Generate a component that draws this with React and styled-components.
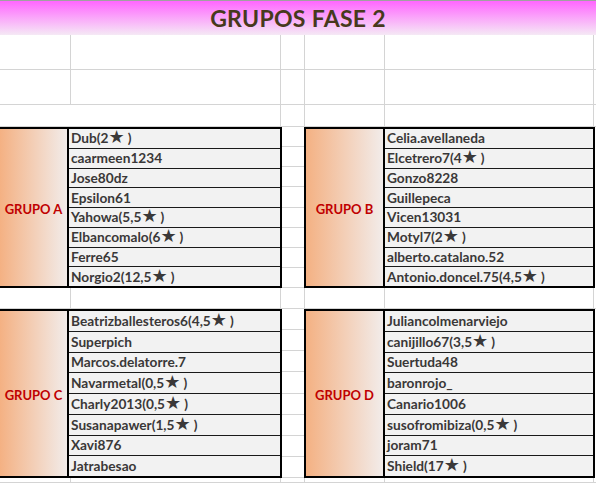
import React from 'react'
import styled, { createGlobalStyle } from 'styled-components'

const GlobalStyle = createGlobalStyle`
  html, body {
    margin: 0;
    padding: 0;
    background: #ffffff;
  }
  body {
    font-family: Lato, "Open Sans", "DejaVu Sans", sans-serif;
    overflow: hidden;
  }
`;

const groupsTop = [
  {
    name: 'GRUPO A',
    players: ['Dub(2★)', 'caarmeen1234', 'Jose80dz', 'Epsilon61', 'Yahowa(5,5★)', 'Elbancomalo(6★)', 'Ferre65', 'Norgio2(12,5★)'],
  },
  {
    name: 'GRUPO B',
    players: ['Celia.avellaneda', 'Elcetrero7(4★)', 'Gonzo8228', 'Guillepeca', 'Vicen13031', 'Motyl7(2★)', 'alberto.catalano.52', 'Antonio.doncel.75(4,5★)'],
  },
];

const groupsBottom = [
  {
    name: 'GRUPO C',
    players: ['Beatrizballesteros6(4,5★)', 'Superpich', 'Marcos.delatorre.7', 'Navarmetal(0,5★)', 'Charly2013(0,5★)', 'Susanapawer(1,5★)', 'Xavi876', 'Jatrabesao'],
  },
  {
    name: 'GRUPO D',
    players: ['Juliancolmenarviejo', 'canijillo67(3,5★)', 'Suertuda48', 'baronrojo_', 'Canario1006', 'susofromibiza(0,5★)', 'joram71', 'Shield(17★)'],
  },
];

const slots = [0, 1, 2, 3, 4, 5, 6, 7];

// the star in the sheet comes from a symbol font and is wider than the text
function Player({ text }) {
  const parts = text.split('★');
  return (
    <Name>
      {parts.map((part, i) => (
        <React.Fragment key={i}>
          {part}
          {i < parts.length - 1 && <Star>★</Star>}
        </React.Fragment>
      ))}
    </Name>
  )
}

function Group({ group, clipLeft }) {
  return (
    <GroupBox $clipLeft={clipLeft}>
      <Label>{group.name}</Label>
      <Names>
        {group.players.map((p) => (
          <Player key={p} text={p} />
        ))}
      </Names>
    </GroupBox>
  )
}

function BlankRow() {
  return (
    <>
      <Cell />
      <Cell />
      <Cell />
      <Cell />
      <Cell />
      <Cell $noRight />
    </>
  )
}

function GapColumn() {
  return (
    <Gap>
      {slots.map((s) => (
        <GapCell key={s} />
      ))}
    </Gap>
  )
}

function App() {
  return (
    <>
      <GlobalStyle />
      <Sheet>
        <Title>GRUPOS FASE 2</Title>

        <BlankRow />
        <BlankRow />

        <Cell $span={2} />
        <Cell />
        <Cell />
        <Cell />
        <Cell $noRight />

        <Group group={groupsTop[0]} clipLeft />
        <GapColumn />
        <Group group={groupsTop[1]} />
        <Edge />

        <BlankRow />

        <Group group={groupsBottom[0]} clipLeft />
        <GapColumn />
        <Group group={groupsBottom[1]} />
        <Edge />

        <BlankRow />
      </Sheet>
    </>
  )
}

export default App

const Sheet = styled.div`
  display: grid;
  grid-template-columns: 71px 210px 24px 80px 209px 2px;
  grid-template-rows: 35px 35px 35px 22px 161px 21px 169px 1fr;
  width: 596px;
  height: 483px;
  overflow: hidden;
`;

const Title = styled.div`
  grid-column: 1 / -1;
  display: flex;
  align-items: center;
  justify-content: center;
  border-top: 1px solid #a0a0a0;
  background: linear-gradient(to bottom, #ff66ff 0%, #f5e9f5 100%);
  color: #47391c;
  font-size: 23px;
  font-weight: 700;
  letter-spacing: 0.3px;
  padding-bottom: 1px;
`;

const Cell = styled.div`
  box-sizing: border-box;
  grid-column: span ${(p) => p.$span || 1};
  border-right: ${(p) => (p.$noRight ? 'none' : '1px solid #d4d4d4')};
  border-bottom: 1px solid #d4d4d4;
`;

const GroupBox = styled.div`
  grid-column: span 2;
  display: grid;
  grid-template-columns: ${(p) => (p.$clipLeft ? '69px' : '79px')} 1fr;
  box-sizing: border-box;
  border: 2px solid #000;
  border-left: ${(p) => (p.$clipLeft ? 'none' : '2px solid #000')};
  margin-right: -1px;
  margin-left: ${(p) => (p.$clipLeft ? '0' : '-1px')};
  position: relative;
  z-index: 1;
`;

const Label = styled.div`
  display: flex;
  align-items: center;
  justify-content: center;
  background: linear-gradient(to right, #f4b183 0%, #f2ecea 100%);
  border-right: 2px solid #000;
  color: #c00000;
  font-size: 13px;
  font-weight: 700;
  padding-top: 2px;
`;

const Names = styled.div`
  display: flex;
  flex-direction: column;
  background: #f2f2f2;
`;

const Name = styled.div`
  flex: 1;
  display: flex;
  align-items: center;
  padding: 0 0 1px 2px;
  color: #3a3838;
  font-size: 13.7px;
  font-weight: 700;
  white-space: nowrap;
  border-bottom: 1px solid #1a1a1a;
  &:last-child {
    border-bottom: none;
  }
`;

const Star = styled.span`
  font-family: "DejaVu Sans", sans-serif;
  font-size: 18px;
  line-height: 1;
  margin: -1px 3px 0 0;
`;

const Gap = styled.div`
  display: flex;
  flex-direction: column;
`;

const GapCell = styled.div`
  flex: 1;
  border-bottom: 1px solid #d4d4d4;
`;

const Edge = styled.div``;
